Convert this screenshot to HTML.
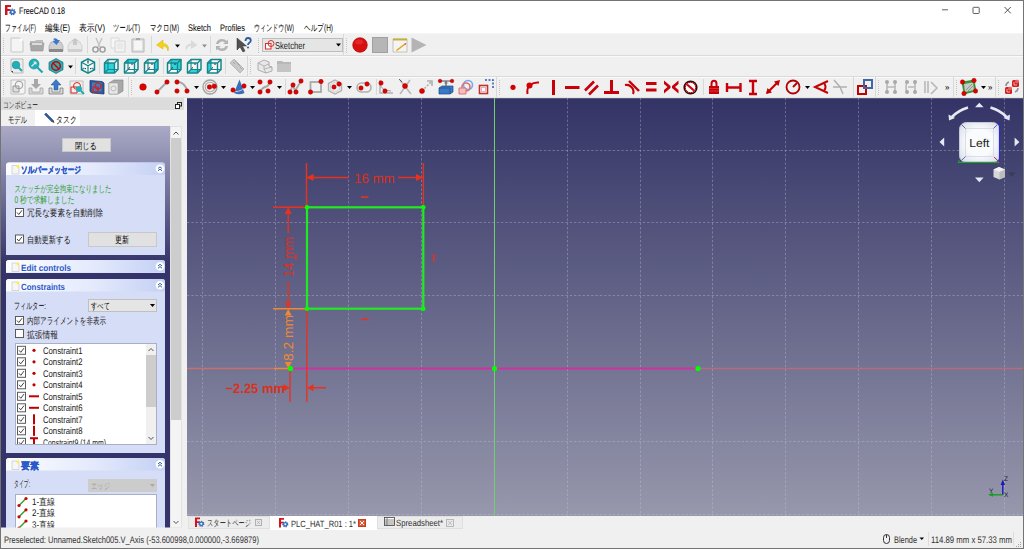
<!DOCTYPE html>
<html><head><meta charset="utf-8"><title>FreeCAD</title>
<style>html,body{margin:0;padding:0;width:1024px;height:549px;overflow:hidden;background:#f0f0f0}svg{display:block}text{font-family:"Liberation Sans",sans-serif;text-rendering:geometricPrecision}</style></head>
<body><svg width="1024" height="549" viewBox="0 0 1024 549">
<rect x="0" y="0" width="1024" height="549" fill="#f0f0f0"/>
<rect x="1" y="1" width="1022" height="32" fill="#ffffff"/>
<g transform="translate(5,5)"><path d="M0 0H6V2H2.5V4H5.5V6H2.5V10H0Z" fill="#d0161b"/><circle cx="7.5" cy="7" r="2.6" fill="#3a6fb8" stroke="#3a6fb8" stroke-width="1.6" stroke-dasharray="1.2 1"/><circle cx="7.5" cy="7" r="1" fill="#fff"/></g>
<text x="19.00" y="14" textLength="46.00" lengthAdjust="spacingAndGlyphs" font-size="9.5" fill="#000">FreeCAD 0.18</text>
<path d="M942 9.8H948" stroke="#606060" stroke-width="1"/>
<rect x="973" y="7.3" width="6.2" height="6.2" rx=".6" fill="none" stroke="#606060" stroke-width="1"/>
<path d="M1004.5 7L1010.8 13.3M1010.8 7L1004.5 13.3" stroke="#505050" stroke-width="1"/>
<text x="5.00" y="30.5" textLength="31.00" lengthAdjust="spacingAndGlyphs" font-size="9.5" fill="#000">ファイル(F)</text>
<text x="45.00" y="30.5" textLength="25.00" lengthAdjust="spacingAndGlyphs" font-size="9.5" fill="#000">編集(E)</text>
<text x="79.00" y="30.5" textLength="26.00" lengthAdjust="spacingAndGlyphs" font-size="9.5" fill="#000">表示(V)</text>
<text x="113.00" y="30.5" textLength="27.00" lengthAdjust="spacingAndGlyphs" font-size="9.5" fill="#000">ツール(T)</text>
<text x="150.00" y="30.5" textLength="29.00" lengthAdjust="spacingAndGlyphs" font-size="9.5" fill="#000">マクロ(M)</text>
<text x="188.00" y="30.5" textLength="23.00" lengthAdjust="spacingAndGlyphs" font-size="9.5" fill="#000">Sketch</text>
<text x="220.00" y="30.5" textLength="25.00" lengthAdjust="spacingAndGlyphs" font-size="9.5" fill="#000">Profiles</text>
<text x="254.00" y="30.5" textLength="40.00" lengthAdjust="spacingAndGlyphs" font-size="9.5" fill="#000">ウィンドウ(W)</text>
<text x="304.00" y="30.5" textLength="29.00" lengthAdjust="spacingAndGlyphs" font-size="9.5" fill="#000">ヘルプ(H)</text>
<rect x="1" y="33" width="1022" height="1" fill="#f5f5f5"/>
<rect x="1" y="55" width="1022" height="1" fill="#dadada"/><rect x="1" y="56" width="1022" height="1" fill="#fafafa"/>
<rect x="1" y="76" width="1022" height="1" fill="#dadada"/><rect x="1" y="77" width="1022" height="1" fill="#fafafa"/>
<rect x="1" y="97" width="1022" height="1" fill="#e2e2e2"/>

<rect x="3" y="38" width="1" height="1" fill="#c4c4c4"/><rect x="3" y="40" width="1" height="1" fill="#c4c4c4"/><rect x="3" y="42" width="1" height="1" fill="#c4c4c4"/><rect x="3" y="44" width="1" height="1" fill="#c4c4c4"/><rect x="3" y="46" width="1" height="1" fill="#c4c4c4"/><rect x="3" y="48" width="1" height="1" fill="#c4c4c4"/><rect x="3" y="50" width="1" height="1" fill="#c4c4c4"/><rect x="3" y="52" width="1" height="1" fill="#c4c4c4"/>
<g transform="translate(9,37)"><path d="M2 1H11L14 4V15H2Z" fill="#f4f4f4" stroke="#c8c8c8"/><circle cx="12" cy="3" r="1.5" fill="#fff"/></g>
<g transform="translate(29,37)"><path d="M1 4H6L7 3H14V6H1Z" fill="#bdbdbd"/><path d="M1 6H15L14 14H2Z" fill="#a8a8a8" stroke="#959595" stroke-width=".6"/><path d="M3 6H13V8H3Z" fill="#dcdcdc"/></g>
<g transform="translate(48,37)"><path d="M1 9L3 5H13L15 9V14H1Z" fill="#cfcfcf" stroke="#9a9a9a" stroke-width=".6"/><path d="M1 12H15V15H1Z" fill="#8a8a8a"/><path d="M5 2Q8 0 10 3L12 3L8.5 8L4.5 4L7 3.5Q6 2.5 5 2Z" fill="#3b78c8"/></g>
<g transform="translate(67,37)"><path d="M1 9L3 5H13L15 9V14H1Z" fill="#e8e8e8" stroke="#c0c0c0" stroke-width=".6"/><path d="M1 12H15V15H1Z" fill="#d0d0d0"/><path d="M6 1H10V5H12L8 8L4 5H6Z" fill="#c8c8c8" transform="rotate(180 8 4.5)"/></g>
<rect x="87" y="36" width="1" height="17" fill="#d8d8d8"/>
<g transform="translate(91,37)"><path d="M5 1L9 10M11 1L7 10" stroke="#c4c4c4" stroke-width="1.4"/><circle cx="4.5" cy="12.5" r="2.6" fill="none" stroke="#9a9a9a" stroke-width="1.4"/><circle cx="11.5" cy="12.5" r="2.6" fill="none" stroke="#9a9a9a" stroke-width="1.4"/></g>
<g transform="translate(110,37)"><path d="M1 1H9V11H1Z" fill="#f6f6f6" stroke="#dadada"/><path d="M5 4H15V15H5Z" fill="#f2f2f2" stroke="#d4d4d4"/><path d="M7 7H13M7 9H13M7 11H13" stroke="#e0e0e0"/></g>
<g transform="translate(130,37)"><path d="M2 2H14V15H2Z" fill="#e0e0e0" stroke="#b8b8b8"/><path d="M4 4H12V13H4Z" fill="#f6f6f6"/><path d="M6 1H10V3H6Z" fill="#a8a8a8"/></g>
<rect x="151" y="36" width="1" height="17" fill="#d8d8d8"/>
<g transform="translate(155,37)"><path d="M13 14Q15 7 8 6.5V3L1.5 8L8 12V9Q12 9 13 14Z" fill="#f2d21a" stroke="#d8b000" stroke-width=".5"/></g>
<path d="M175 44.5H180L177.5 47.5Z" fill="#000"/>
<g transform="translate(183,37)"><path d="M3 14Q1 7 8 6.5V3L14.5 8L8 12V9Q4 9 3 14Z" fill="#dadada"/></g>
<path d="M202 44.5H207L204.5 47.5Z" fill="#909090"/>
<rect x="210" y="36" width="1" height="17" fill="#d8d8d8"/>
<g transform="translate(214,37)"><path d="M2 7Q3 2 8 2Q11 2 13 4L14 2V7H9L11 5.5Q10 4.5 8 4.5Q5.5 4.5 4.5 7Z" fill="#b4b4b4"/><path d="M14 9Q13 14 8 14Q5 14 3 12L2 14V9H7L5 10.5Q6 11.5 8 11.5Q10.5 11.5 11.5 9Z" fill="#b4b4b4"/></g>
<g transform="translate(236,37)"><path d="M1 1L1 13L4 10L7 15L9 14L6.5 9H10.5Z" fill="#505050" stroke="#303030" stroke-width=".5"/><path d="M9.5 4Q9.5 1 12 1Q14.8 1 14.8 3.5Q14.8 5 13 6Q12 6.7 12 8" fill="none" stroke="#2a5aa0" stroke-width="1.8"/><circle cx="12" cy="10.5" r="1" fill="#2a5aa0"/></g>
<rect x="258" y="38" width="1" height="1" fill="#c4c4c4"/><rect x="258" y="40" width="1" height="1" fill="#c4c4c4"/><rect x="258" y="42" width="1" height="1" fill="#c4c4c4"/><rect x="258" y="44" width="1" height="1" fill="#c4c4c4"/><rect x="258" y="46" width="1" height="1" fill="#c4c4c4"/><rect x="258" y="48" width="1" height="1" fill="#c4c4c4"/><rect x="258" y="50" width="1" height="1" fill="#c4c4c4"/><rect x="258" y="52" width="1" height="1" fill="#c4c4c4"/>
<rect x="262.5" y="38.5" width="80" height="13" fill="#e5e5e5" stroke="#bdbdbd"/>
<g transform="translate(265,40)"><rect x="0.5" y="3.5" width="5.5" height="5.5" fill="#fff" stroke="#d83030" stroke-width="1"/><circle cx="6" cy="3.5" r="3" fill="none" stroke="#d83030" stroke-width="1"/></g>
<text x="275.00" y="49" textLength="30.00" lengthAdjust="spacingAndGlyphs" font-size="10" fill="#202020">Sketcher</text>
<path d="M336 43.5H341L338.5 46.5Z" fill="#000"/>
<rect x="343" y="34" width="1" height="21" fill="#d8d8d8"/>
<rect x="346" y="38" width="1" height="1" fill="#c4c4c4"/><rect x="346" y="40" width="1" height="1" fill="#c4c4c4"/><rect x="346" y="42" width="1" height="1" fill="#c4c4c4"/><rect x="346" y="44" width="1" height="1" fill="#c4c4c4"/><rect x="346" y="46" width="1" height="1" fill="#c4c4c4"/><rect x="346" y="48" width="1" height="1" fill="#c4c4c4"/><rect x="346" y="50" width="1" height="1" fill="#c4c4c4"/><rect x="346" y="52" width="1" height="1" fill="#c4c4c4"/>
<g transform="translate(352,37)"><circle cx="8" cy="8" r="7.3" fill="#d81010" stroke="#900" stroke-width=".6"/><ellipse cx="7" cy="5" rx="4" ry="2.5" fill="#f04040" opacity=".5"/></g>
<g transform="translate(372,37)"><rect x="0.5" y="0.5" width="15" height="15" fill="#b6b6b6" stroke="#a0a0a0"/></g>
<g transform="translate(392,37)"><path d="M1 2H15V15H1Z" fill="#f4f4f0" stroke="#b0b0a8" stroke-width=".7"/><path d="M1 1.5H15V3.5H1Z" fill="#c8b040"/><path d="M4 13L12 7L13 8L5 14Z" fill="#e8a020"/><path d="M12 7L13.5 6L14.3 7L13 8Z" fill="#e03030"/></g>
<g transform="translate(411,37)"><path d="M0.5 0.5L15.5 8L0.5 15.5Z" fill="#b4b4b4"/></g>
<rect x="3" y="59" width="1" height="1" fill="#c4c4c4"/><rect x="3" y="61" width="1" height="1" fill="#c4c4c4"/><rect x="3" y="63" width="1" height="1" fill="#c4c4c4"/><rect x="3" y="65" width="1" height="1" fill="#c4c4c4"/><rect x="3" y="67" width="1" height="1" fill="#c4c4c4"/><rect x="3" y="69" width="1" height="1" fill="#c4c4c4"/><rect x="3" y="71" width="1" height="1" fill="#c4c4c4"/><rect x="3" y="73" width="1" height="1" fill="#c4c4c4"/>
<g transform="translate(9,58)"><path d="M2 1H14V15H4L2 13Z" fill="#ececec" stroke="#a8a8a8" stroke-width=".7"/><circle cx="7" cy="7" r="3.8" fill="#20b0b8" stroke="#108890" stroke-width=".6"/><path d="M9.5 9.5L13 13" stroke="#20a8b0" stroke-width="2"/><path d="M2 13L4 13L4 15Z" fill="#444"/></g>
<g transform="translate(28,58)"><circle cx="6" cy="6" r="5" fill="#20b0b8" stroke="#108890" stroke-width=".6"/><path d="M3.5 8.5L8 4M8 4H5.5M8 4V6.5" stroke="#e8e8e8" stroke-width="1.1" fill="none"/><path d="M9.5 9.5L14.5 14.5" stroke="#20a8b0" stroke-width="2.2"/></g>
<g transform="translate(48,58)"><path d="M8 0.5L15 4.3V11.7L8 15.5L1 11.7V4.3Z" fill="#20b0b8" stroke="#107078" stroke-width=".7"/><circle cx="8" cy="8" r="4.3" fill="none" stroke="#d00000" stroke-width="1.5"/><path d="M5 5L11 11" stroke="#d00000" stroke-width="1.5"/></g>
<path d="M68 65.5H73L70.5 68.5Z" fill="#000"/>
<rect x="75" y="58" width="1" height="16" fill="#d8d8d8"/>
<g transform="translate(80,58)"><path d="M8 0.8L14.5 4.3V11.7L8 15.2L1.5 11.7V4.3Z" fill="#f8f8f8" stroke="#17868c" stroke-width="1.5"/><path d="M1.5 4.3L8 7.8L14.5 4.3M8 7.8V15M8 0.8V4M1.5 11.7L4.5 10M14.5 11.7L11.5 10" stroke="#17868c" stroke-width="1.2" fill="none"/><path d="M8 3.5V5.5M5 11L6 10.3M11 11L10 10.3" stroke="#222" stroke-width="1"/></g>
<rect x="99" y="58" width="1" height="16" fill="#d8d8d8"/>
<g transform="translate(103,58)"><path d="M1.5 5L5 1.5H15V11.5L11.5 15H1.5Z" fill="#f8f8f8"/><path d="M1.5 5H11.5V15H1.5Z" fill="#2cd4dc"/><path d="M5 1.5V11.5H15M5 11.5L1.5 15" stroke="#17868c" stroke-width="1.1" fill="none"/><path d="M1.5 5L5 1.5H15V11.5L11.5 15H1.5Z" stroke="#17868c" stroke-width="1.5" fill="none" stroke-linejoin="round"/><path d="M1.5 5H11.5V15M11.5 5L15 1.5" stroke="#17868c" stroke-width="1.4" fill="none"/></g>
<g transform="translate(123,58)"><path d="M1.5 5L5 1.5H15V11.5L11.5 15H1.5Z" fill="#f8f8f8"/><path d="M1.5 5L5 1.5H15L11.5 5Z" fill="#2cd4dc"/><path d="M5 1.5V11.5H15M5 11.5L1.5 15" stroke="#17868c" stroke-width="1.1" fill="none"/><path d="M1.5 5L5 1.5H15V11.5L11.5 15H1.5Z" stroke="#17868c" stroke-width="1.5" fill="none" stroke-linejoin="round"/><path d="M1.5 5H11.5V15M11.5 5L15 1.5" stroke="#17868c" stroke-width="1.4" fill="none"/><path d="M5.5 10.5L7 9.5M9 5.5V7" stroke="#222" stroke-width="1"/></g>
<g transform="translate(143,58)"><path d="M1.5 5L5 1.5H15V11.5L11.5 15H1.5Z" fill="#f8f8f8"/><path d="M11.5 5L15 1.5V11.5L11.5 15Z" fill="#2cd4dc"/><path d="M5 1.5V11.5H15M5 11.5L1.5 15" stroke="#17868c" stroke-width="1.1" fill="none"/><path d="M1.5 5L5 1.5H15V11.5L11.5 15H1.5Z" stroke="#17868c" stroke-width="1.5" fill="none" stroke-linejoin="round"/><path d="M1.5 5H11.5V15M11.5 5L15 1.5" stroke="#17868c" stroke-width="1.4" fill="none"/><path d="M5.5 10.5L7 9.5M9 5.5V7" stroke="#222" stroke-width="1"/></g>
<rect x="163" y="58" width="1" height="16" fill="#d8d8d8"/>
<g transform="translate(166,58)"><path d="M1.5 5L5 1.5H15V11.5L11.5 15H1.5Z" fill="#f8f8f8"/><path d="M5 1.5H15V11.5H5Z" fill="#2cd4dc"/><path d="M5 1.5V11.5H15M5 11.5L1.5 15" stroke="#17868c" stroke-width="1.1" fill="none"/><path d="M1.5 5L5 1.5H15V11.5L11.5 15H1.5Z" stroke="#17868c" stroke-width="1.5" fill="none" stroke-linejoin="round"/><path d="M1.5 5H11.5V15M11.5 5L15 1.5" stroke="#17868c" stroke-width="1.4" fill="none"/><path d="M5.5 10.5L7 9.5M9 5.5V7" stroke="#222" stroke-width="1"/></g>
<g transform="translate(186,58)"><path d="M1.5 5L5 1.5H15V11.5L11.5 15H1.5Z" fill="#f8f8f8"/><path d="M1.5 15L5 11.5H15L11.5 15Z" fill="#2cd4dc"/><path d="M5 1.5V11.5H15M5 11.5L1.5 15" stroke="#17868c" stroke-width="1.1" fill="none"/><path d="M1.5 5L5 1.5H15V11.5L11.5 15H1.5Z" stroke="#17868c" stroke-width="1.5" fill="none" stroke-linejoin="round"/><path d="M1.5 5H11.5V15M11.5 5L15 1.5" stroke="#17868c" stroke-width="1.4" fill="none"/><path d="M5.5 10.5L7 9.5M9 5.5V7" stroke="#222" stroke-width="1"/></g>
<g transform="translate(206,58)"><path d="M1.5 5L5 1.5H15V11.5L11.5 15H1.5Z" fill="#f8f8f8"/><path d="M1.5 5L5 1.5V11.5L1.5 15Z" fill="#2cd4dc"/><path d="M5 1.5V11.5H15M5 11.5L1.5 15" stroke="#17868c" stroke-width="1.1" fill="none"/><path d="M1.5 5L5 1.5H15V11.5L11.5 15H1.5Z" stroke="#17868c" stroke-width="1.5" fill="none" stroke-linejoin="round"/><path d="M1.5 5H11.5V15M11.5 5L15 1.5" stroke="#17868c" stroke-width="1.4" fill="none"/><path d="M5.5 10.5L7 9.5M9 5.5V7" stroke="#222" stroke-width="1"/></g>
<rect x="225" y="58" width="1" height="16" fill="#d8d8d8"/>
<g transform="translate(229,58)"><path d="M1 5L5 1L15 11L11 15Z" fill="#c8c8c8" stroke="#a8a8a8" stroke-width=".7"/><path d="M4 4L6 6M6 3L7.5 4.5M8 5L10 7M9.5 6.5L11 8M11 9L13 11" stroke="#909090" stroke-width=".6"/></g>
<rect x="247" y="56" width="1" height="20" fill="#d8d8d8"/>
<rect x="250" y="59" width="1" height="1" fill="#c4c4c4"/><rect x="250" y="61" width="1" height="1" fill="#c4c4c4"/><rect x="250" y="63" width="1" height="1" fill="#c4c4c4"/><rect x="250" y="65" width="1" height="1" fill="#c4c4c4"/><rect x="250" y="67" width="1" height="1" fill="#c4c4c4"/><rect x="250" y="69" width="1" height="1" fill="#c4c4c4"/><rect x="250" y="71" width="1" height="1" fill="#c4c4c4"/><rect x="250" y="73" width="1" height="1" fill="#c4c4c4"/>
<g transform="translate(257,58)"><path d="M1 5L7 2L12 4V8L15 9V13L9 15L1 12Z" fill="#e8e8e8" stroke="#a0a0a0" stroke-width=".8"/><path d="M1 5L7 8L12 6M7 8V11L15 9M7 11L9 15" stroke="#a0a0a0" stroke-width=".7" fill="none"/></g>
<g transform="translate(276,58)"><path d="M1 3H6L7 4H15V14H1Z" fill="#b8b8b8"/><path d="M1 6H15V14H1Z" fill="#c4c4c4"/></g>
<rect x="3" y="80" width="1" height="1" fill="#c4c4c4"/><rect x="3" y="82" width="1" height="1" fill="#c4c4c4"/><rect x="3" y="84" width="1" height="1" fill="#c4c4c4"/><rect x="3" y="86" width="1" height="1" fill="#c4c4c4"/><rect x="3" y="88" width="1" height="1" fill="#c4c4c4"/><rect x="3" y="90" width="1" height="1" fill="#c4c4c4"/><rect x="3" y="92" width="1" height="1" fill="#c4c4c4"/><rect x="3" y="94" width="1" height="1" fill="#c4c4c4"/>
<g transform="translate(10,79)"><path d="M1 1H15V14L13 15H1Z" fill="#f4f4f4" stroke="#b0b0b0" stroke-width=".8"/><path d="M3 7H9V13H3Z" fill="#e0e0e0" stroke="#9a9a9a"/><circle cx="9" cy="6" r="3.8" fill="none" stroke="#9a9a9a" stroke-width="1"/></g>
<g transform="translate(28,79)"><path d="M1 9H4V13H12V9H15V15H1Z" fill="#d8d8d8" stroke="#a0a0a0" stroke-width=".7"/><path d="M6 0H10V5H13L8 10L3 5H6Z" fill="#a8a8a8"/></g>
<g transform="translate(48,79)"><path d="M1 9H4V13H12V9H15V15H1Z" fill="#d8d8d8" stroke="#707070" stroke-width=".7"/><path d="M6 11H10V6H13L8 0.5L3 6H6Z" fill="#3a78c8" stroke="#20508a" stroke-width=".5"/></g>
<g transform="translate(69,79)"><path d="M1 2H14V15H1Z" fill="#f0f0f0" stroke="#b0b0b0" stroke-width=".8"/><path d="M2 8H8V14H2Z" fill="none" stroke="#e02020" stroke-width="1"/><circle cx="8" cy="7" r="3.5" fill="none" stroke="#e02020" stroke-width="1"/><circle cx="10" cy="10" r="3" fill="#20b0b8"/><path d="M12 12L15 15" stroke="#20a8b0" stroke-width="1.8"/></g>
<g transform="translate(89,79)"><path d="M1 1.5L13 2.5L15 4V15L3 14L1 12.5Z" fill="#2e5a98" stroke="#1e3a70" stroke-width=".8"/><path d="M3 3.5H12.5V12.5H3Z" fill="#4a7ab8"/><path d="M4 8H9V13H4Z" fill="none" stroke="#d02020" stroke-width="1.2"/><circle cx="9" cy="7" r="3" fill="none" stroke="#d02020" stroke-width="1.2"/></g>
<g transform="translate(108,79)"><path d="M1 4L6 1H15V12L10 15H1Z" fill="#a8a8a8" stroke="#808080" stroke-width=".6"/><path d="M1 4H10V15H1Z" fill="#e8e8e8" stroke="#a0a0a0" stroke-width=".6"/><circle cx="5.5" cy="9.5" r="2.5" fill="none" stroke="#b8b8b8"/></g>
<rect x="128" y="77" width="1" height="20" fill="#d8d8d8"/>
<rect x="131" y="80" width="1" height="1" fill="#c4c4c4"/><rect x="131" y="82" width="1" height="1" fill="#c4c4c4"/><rect x="131" y="84" width="1" height="1" fill="#c4c4c4"/><rect x="131" y="86" width="1" height="1" fill="#c4c4c4"/><rect x="131" y="88" width="1" height="1" fill="#c4c4c4"/><rect x="131" y="90" width="1" height="1" fill="#c4c4c4"/><rect x="131" y="92" width="1" height="1" fill="#c4c4c4"/><rect x="131" y="94" width="1" height="1" fill="#c4c4c4"/>
<g transform="translate(135,79)"><circle cx="8" cy="8" r="3.3" fill="#e00000" stroke="#a00000" stroke-width=".5"/></g>
<g transform="translate(154,79)"><path d="M3 13L13 3" stroke="#a8a8a8" stroke-width="2"/><circle cx="3" cy="13" r="2.2" fill="#e00000" stroke="#a00000" stroke-width=".5"/><circle cx="13" cy="3" r="2.2" fill="#e00000" stroke="#a00000" stroke-width=".5"/></g>
<g transform="translate(174,79)"><path d="M3 3Q11 3 13 12" stroke="#a8a8a8" stroke-width="2" fill="none"/><circle cx="3" cy="3" r="2.2" fill="#e00000" stroke="#a00000" stroke-width=".5"/><circle cx="3" cy="12" r="2.2" fill="#e00000" stroke="#a00000" stroke-width=".5"/><circle cx="13" cy="12" r="2.2" fill="#e00000" stroke="#a00000" stroke-width=".5"/></g>
<path d="M194 86H199L196.5 89Z" fill="#000"/>
<g transform="translate(202,79)"><circle cx="8" cy="8" r="7" fill="none" stroke="#a0a0a0" stroke-width="1.3"/><circle cx="8" cy="8" r="4.8" fill="none" stroke="#a8a8a8" stroke-width="1.1"/><circle cx="7.5" cy="8" r="2.3" fill="#e00000" stroke="#a00000" stroke-width=".5"/><circle cx="12.3" cy="7.3" r="2.3" fill="#e00000" stroke="#a00000" stroke-width=".5"/></g>
<path d="M221 86H226L223.5 89Z" fill="#000"/>
<g transform="translate(231,79)"><path d="M8.5 0.5L13.5 14Q8 16.5 3 14Z" fill="#3a70b8"/><path d="M1 12Q8 14 13 9" stroke="#c8c8e0" stroke-width="1" fill="none"/><circle cx="2" cy="11" r="2.2" fill="#e00000" stroke="#a00000" stroke-width=".5"/><circle cx="13" cy="7" r="2.2" fill="#e00000" stroke="#a00000" stroke-width=".5"/></g>
<path d="M250 86H255L252.5 89Z" fill="#000"/>
<g transform="translate(257,79)"><path d="M3 13Q5 9 8 8Q12 7 13 3" stroke="#a8a8a8" stroke-width="2" fill="none"/><circle cx="3" cy="3" r="2.2" fill="#e00000" stroke="#a00000" stroke-width=".5"/><circle cx="13" cy="3" r="2.2" fill="#e00000" stroke="#a00000" stroke-width=".5"/><circle cx="3" cy="13" r="2.2" fill="#e00000" stroke="#a00000" stroke-width=".5"/><circle cx="11" cy="12" r="2.2" fill="#e00000" stroke="#a00000" stroke-width=".5"/></g>
<path d="M277 86H282L279.5 89Z" fill="#000"/>
<rect x="285" y="79" width="1" height="16" fill="#d8d8d8"/>
<g transform="translate(288,79)"><path d="M2 13L5 6L7 12L13 2" stroke="#a8a8a8" stroke-width="1.8" fill="none"/><circle cx="5" cy="6" r="2.2" fill="#e00000" stroke="#a00000" stroke-width=".5"/><circle cx="13" cy="2" r="2.2" fill="#e00000" stroke="#a00000" stroke-width=".5"/><circle cx="2" cy="13" r="2.2" fill="#e00000" stroke="#a00000" stroke-width=".5"/><circle cx="8" cy="13" r="2.2" fill="#e00000" stroke="#a00000" stroke-width=".5"/></g>
<g transform="translate(308,79)"><rect x="2.5" y="3" width="10.5" height="10" fill="none" stroke="#a8a8a8" stroke-width="1.8"/><circle cx="2.5" cy="13" r="2.2" fill="#e00000" stroke="#a00000" stroke-width=".5"/><circle cx="13" cy="2.5" r="2.2" fill="#e00000" stroke="#a00000" stroke-width=".5"/></g>
<g transform="translate(327,79)"><path d="M8 1L14.5 4.5V11.5L8 15L1.5 11.5V4.5Z" fill="none" stroke="#b0b0b0" stroke-width="1.4"/><path d="M8 3L12.5 5.5V10.5L8 13L3.5 10.5V5.5Z" fill="none" stroke="#c8c8c8" stroke-width=".8"/><circle cx="7" cy="8" r="2.2" fill="#e00000" stroke="#a00000" stroke-width=".5"/><circle cx="12" cy="5" r="2.2" fill="#e00000" stroke="#a00000" stroke-width=".5"/></g>
<path d="M347 86H352L349.5 89Z" fill="#000"/>
<g transform="translate(356,79)"><rect x="1" y="4" width="14" height="9" rx="4.5" fill="none" stroke="#b0b0b0" stroke-width="1.6"/><circle cx="5" cy="9" r="2.2" fill="#e00000" stroke="#a00000" stroke-width=".5"/><circle cx="11" cy="5" r="2.2" fill="#e00000" stroke="#a00000" stroke-width=".5"/></g>
<rect x="376" y="79" width="1" height="16" fill="#d8d8d8"/>
<g transform="translate(378,79)"><path d="M2 1V14H15" stroke="#b0b0b0" stroke-width="1.4" fill="none"/><path d="M2 3Q2 12 13 12" stroke="#a0a0a0" stroke-width="1" fill="none"/><circle cx="3" cy="4" r="2.2" fill="#e00000" stroke="#a00000" stroke-width=".5"/><circle cx="7" cy="12" r="2.2" fill="#e00000" stroke="#a00000" stroke-width=".5"/></g>
<g transform="translate(398,79)"><path d="M2 1L13 15M12 1L2 15" stroke="#b8b8b8" stroke-width="1.6"/><path d="M1 0L4 3" stroke="#404040" stroke-width=".8"/><circle cx="7" cy="7" r="2.5" fill="#e00000" stroke="#a00000" stroke-width=".5"/></g>
<g transform="translate(418,79)"><path d="M4 12L14 2" stroke="#b0b0b0" stroke-width="1.6" stroke-dasharray="2 1.5"/><path d="M9 2H14V7" stroke="#b0b0b0" stroke-width="1.6" fill="none"/><circle cx="4" cy="12" r="2.5" fill="#e00000" stroke="#a00000" stroke-width=".5"/></g>
<g transform="translate(438,79)"><path d="M1 9L4 7H15V13L12 15H1Z" fill="#3a78c8" stroke="#1e4a80" stroke-width=".7"/><path d="M1 9H12V15" stroke="#1e4a80" stroke-width=".7" fill="none"/><path d="M8 2V7M6.5 4H9.5" stroke="#606060" stroke-width="1.2"/><path d="M2 2H14" stroke="#505050" stroke-width="1"/><circle cx="2" cy="2" r="1.8" fill="#e00000" stroke="#a00000" stroke-width=".5"/><circle cx="14" cy="2" r="1.8" fill="#e00000" stroke="#a00000" stroke-width=".5"/></g>
<g transform="translate(458,79)"><circle cx="10" cy="6" r="4.5" fill="none" stroke="#78a8f0" stroke-width="1.6"/><circle cx="8" cy="8" r="4" fill="none" stroke="#e07070" stroke-width="1.6"/><path d="M1 9H8V15H1Z" fill="#f0c0c0" stroke="#e07070" stroke-width="1"/></g>
<g transform="translate(478,79)"><path d="M7 1H15V9" stroke="#2a5ab0" stroke-width="1.5" stroke-dasharray="2 1.5" fill="none"/><rect x="1.5" y="6.5" width="8" height="8" fill="#fff" stroke="#c03030" stroke-width="1.6"/><rect x="3.5" y="8.5" width="4" height="4" fill="#fff" stroke="#e0a0a0" stroke-width=".8"/></g>
<rect x="496" y="77" width="1" height="20" fill="#d8d8d8"/>
<rect x="499" y="80" width="1" height="1" fill="#c4c4c4"/><rect x="499" y="82" width="1" height="1" fill="#c4c4c4"/><rect x="499" y="84" width="1" height="1" fill="#c4c4c4"/><rect x="499" y="86" width="1" height="1" fill="#c4c4c4"/><rect x="499" y="88" width="1" height="1" fill="#c4c4c4"/><rect x="499" y="90" width="1" height="1" fill="#c4c4c4"/><rect x="499" y="92" width="1" height="1" fill="#c4c4c4"/><rect x="499" y="94" width="1" height="1" fill="#c4c4c4"/>
<g transform="translate(505,79)"><circle cx="8" cy="8.3" r="2.6" fill="#d40000"/></g>
<g transform="translate(525,79)"><path d="M2.5 15Q1.5 9 5 6Q9 3 14 3.5" stroke="#c8000a" stroke-width="2" fill="none"/><circle cx="4.5" cy="6.5" r="3" fill="#d40000"/></g>
<g transform="translate(545,79)"><path d="M8.5 1V16" stroke="#c8000a" stroke-width="3"/></g>
<g transform="translate(565,79)"><path d="M0 8.5H14.5" stroke="#c8000a" stroke-width="3"/></g>
<g transform="translate(584,79)"><path d="M1 11.5L10 2.5M5 15.5L14 6.5" stroke="#c8000a" stroke-width="2.6"/></g>
<g transform="translate(604,79)"><path d="M7.5 1V13" stroke="#c8000a" stroke-width="3"/><path d="M0 12H15V15H0Z" fill="#c8000a"/></g>
<g transform="translate(624,79)"><path d="M1 6Q6 5 9 10Q10 13 9 15" stroke="#c8000a" stroke-width="2.2" fill="none"/><path d="M5 2L15 12" stroke="#c8000a" stroke-width="2.4"/></g>
<g transform="translate(643,79)"><path d="M3 4.5H13.5M3 11H13.5" stroke="#c8000a" stroke-width="3"/></g>
<g transform="translate(663,79)"><path d="M1 1.5L7.5 7L7.5 9L1 14.5L1 11L4.5 8L1 5Z" fill="#c8000a"/><path d="M15.5 1.5L9 7L9 9L15.5 14.5L15.5 11L12 8L15.5 5Z" fill="#c8000a"/></g>
<g transform="translate(683,79)"><circle cx="7.5" cy="8.5" r="6.3" fill="#fff" stroke="#2a0808" stroke-width="1.6"/><circle cx="7.5" cy="8.5" r="5.2" fill="none" stroke="#c8000a" stroke-width="1"/><path d="M4 5.5L11 11.5" stroke="#c8000a" stroke-width="2.2"/></g>
<rect x="703" y="79" width="1" height="16" fill="#d8d8d8"/>
<g transform="translate(708,79)"><path d="M3.5 8V5Q3.5 1.8 6 1.8Q8.5 1.8 8.5 5V8" stroke="#c8000a" stroke-width="2" fill="none"/><rect x="1" y="7" width="10" height="8" fill="#c8000a"/><path d="M1 9.5H11M1 12H11" stroke="#e05050" stroke-width=".6"/></g>
<g transform="translate(726,79)"><path d="M1 4V13M14.5 4V13M1 8.5H14.5" stroke="#c8000a" stroke-width="2.4"/></g>
<g transform="translate(745,79)"><path d="M4 2H12M4 15H12M8 2V15" stroke="#c8000a" stroke-width="2.4"/></g>
<g transform="translate(765,79)"><path d="M2 14L13 3" stroke="#c40000" stroke-width="2.2"/><path d="M15 1L9 2.5L13.5 7Z M1 15L2.5 9L7 13.5Z" fill="#c40000"/></g>
<g transform="translate(785,79)"><circle cx="8" cy="8" r="6.5" fill="none" stroke="#b00000" stroke-width="1.8"/><path d="M8 8L12 4" stroke="#b00000" stroke-width="1.8"/></g>
<path d="M805 86H810L807.5 89Z" fill="#000"/>
<g transform="translate(813,79)"><path d="M15 2L2 8L15 14M11 4Q14 8 11 12" stroke="#c40000" stroke-width="2" fill="none"/></g>
<g transform="translate(832,79)"><path d="M1 8H15" stroke="#b0b0b0" stroke-width="1.5"/><path d="M2 1L8 8L11 15" stroke="#b0b0b0" stroke-width="1.5" fill="none"/></g>
<rect x="853" y="77" width="1" height="20" fill="#d8d8d8"/>
<g transform="translate(857,79)"><rect x="1" y="7" width="8" height="8" fill="none" stroke="#c40000" stroke-width="2"/><rect x="7" y="1" width="8" height="8" fill="none" stroke="#3a68a8" stroke-width="2"/></g>
<rect x="875" y="77" width="1" height="20" fill="#d8d8d8"/>
<rect x="878" y="80" width="1" height="1" fill="#c4c4c4"/><rect x="878" y="82" width="1" height="1" fill="#c4c4c4"/><rect x="878" y="84" width="1" height="1" fill="#c4c4c4"/><rect x="878" y="86" width="1" height="1" fill="#c4c4c4"/><rect x="878" y="88" width="1" height="1" fill="#c4c4c4"/><rect x="878" y="90" width="1" height="1" fill="#c4c4c4"/><rect x="878" y="92" width="1" height="1" fill="#c4c4c4"/><rect x="878" y="94" width="1" height="1" fill="#c4c4c4"/>
<g transform="translate(883,79)"><path d="M4 3V13M12 3V13M4 8H12" stroke="#b8b8b8" stroke-width="1.6" fill="none"/><circle cx="4" cy="3" r="2" fill="#a8a8a8"/><circle cx="12" cy="3" r="2" fill="#a8a8a8"/><circle cx="4" cy="13" r="2" fill="#a8a8a8"/><circle cx="12" cy="13" r="2" fill="#a8a8a8"/></g>
<g transform="translate(903,79)"><path d="M4 3Q2 8 4 13M12 3V13M5 8H11" stroke="#b8b8b8" stroke-width="1.6" fill="none"/><circle cx="4" cy="3" r="2" fill="#a8a8a8"/><circle cx="12" cy="3" r="2" fill="#a8a8a8"/><circle cx="4" cy="13" r="2" fill="#a8a8a8"/><circle cx="12" cy="13" r="2" fill="#a8a8a8"/></g>
<g transform="translate(923,79)"><path d="M2 2V14M5 2V14M8 3L14 9L8 15" stroke="#b8b8b8" stroke-width="1.6" fill="none"/></g>
<text x="945.00" y="89.5" textLength="4.45" lengthAdjust="spacingAndGlyphs" font-size="8" fill="#000">»</text>
<rect x="953" y="77" width="1" height="20" fill="#d8d8d8"/>
<rect x="956" y="80" width="1" height="1" fill="#c4c4c4"/><rect x="956" y="82" width="1" height="1" fill="#c4c4c4"/><rect x="956" y="84" width="1" height="1" fill="#c4c4c4"/><rect x="956" y="86" width="1" height="1" fill="#c4c4c4"/><rect x="956" y="88" width="1" height="1" fill="#c4c4c4"/><rect x="956" y="90" width="1" height="1" fill="#c4c4c4"/><rect x="956" y="92" width="1" height="1" fill="#c4c4c4"/><rect x="956" y="94" width="1" height="1" fill="#c4c4c4"/>
<g transform="translate(961,79)"><path d="M1 3L13 1L15 12L3 15Z" fill="#30a030" stroke="#207020" stroke-width=".6"/><path d="M3 5L12 3.5L13 11L4 13Z" fill="#c8c8c8"/><path d="M5 11L11 5M7 12L12 7" stroke="#888" stroke-width=".8"/><circle cx="1.5" cy="3" r="2.2" fill="#e00000" stroke="#a00000" stroke-width=".5"/><circle cx="13" cy="1.5" r="2.2" fill="#e00000" stroke="#a00000" stroke-width=".5"/><circle cx="14.5" cy="12" r="2.2" fill="#e00000" stroke="#a00000" stroke-width=".5"/><circle cx="3" cy="14.5" r="2.2" fill="#e00000" stroke="#a00000" stroke-width=".5"/></g>
<path d="M981 86H986L983.5 89Z" fill="#000"/>
<text x="988.00" y="89.5" textLength="4.45" lengthAdjust="spacingAndGlyphs" font-size="8" fill="#000">»</text>
<rect x="995" y="77" width="1" height="20" fill="#d8d8d8"/>
<rect x="998" y="80" width="1" height="1" fill="#c4c4c4"/><rect x="998" y="82" width="1" height="1" fill="#c4c4c4"/><rect x="998" y="84" width="1" height="1" fill="#c4c4c4"/><rect x="998" y="86" width="1" height="1" fill="#c4c4c4"/><rect x="998" y="88" width="1" height="1" fill="#c4c4c4"/><rect x="998" y="90" width="1" height="1" fill="#c4c4c4"/><rect x="998" y="92" width="1" height="1" fill="#c4c4c4"/><rect x="998" y="94" width="1" height="1" fill="#c4c4c4"/>
<g transform="translate(1004,79)"><path d="M2 7Q2 4 5 3M14 9Q14 12 11 13" stroke="#909090" stroke-width="1.6" fill="none"/><rect x="8" y="1" width="7" height="7" rx="1.5" fill="#d02020"/><rect x="1" y="8" width="7" height="7" rx="1.5" fill="#d02020"/><circle cx="13" cy="2.5" r="2" fill="#f08080" opacity=".7"/><circle cx="6" cy="9.5" r="2" fill="#f08080" opacity=".7"/><path d="M10 3V6H13M3 10V13H6" stroke="#f8d0d0" stroke-width=".8" fill="none"/></g>
<rect x="1" y="98" width="183" height="12" fill="#dcdcdc"/>
<text x="3.00" y="108" textLength="35.00" lengthAdjust="spacingAndGlyphs" font-size="9" fill="#303030">コンボビュー</text>
<g transform="translate(175,102)"><rect x="2.5" y=".5" width="4" height="3.5" fill="none" stroke="#222" stroke-width="1"/><rect x=".5" y="2.5" width="4" height="4" fill="#fff" stroke="#222" stroke-width="1"/></g>
<rect x="1" y="110" width="183" height="16" fill="#f0f0f0"/>
<rect x="35" y="110" width="45" height="16" fill="#ffffff"/>
<text x="8.00" y="123" textLength="19.00" lengthAdjust="spacingAndGlyphs" font-size="9.5" fill="#202020">モデル</text>
<g transform="translate(44,112.5)"><path d="M0.5 2L2 0.5L9.5 8L8 9.5Z" fill="#2a5aa0" stroke="#1a3a70" stroke-width=".5"/><path d="M8 9.5L9.5 8L10.5 10.5Z" fill="#303030"/></g>
<text x="56.00" y="123" textLength="21.00" lengthAdjust="spacingAndGlyphs" font-size="9.5" fill="#202020">タスク</text>
<defs><linearGradient id="pg" x1="0" y1="126" x2="0" y2="265" gradientUnits="userSpaceOnUse"><stop offset="0" stop-color="#aaaac6"/><stop offset="1" stop-color="#34346a"/></linearGradient><linearGradient id="hg" x1="0" y1="0" x2="1" y2="0"><stop offset="0" stop-color="#fcfdff"/><stop offset=".55" stop-color="#e4eafc"/><stop offset="1" stop-color="#c4d0f4"/></linearGradient></defs>
<rect x="1" y="126" width="169" height="402" fill="url(#pg)"/>
<rect x="170.5" y="126.5" width="11" height="401" fill="#f4f4f4" stroke="#e2e2e2"/>
<rect x="171" y="138" width="10" height="282" fill="#cdcdcd"/>
<path d="M173.5 134.5L176 132L178.5 134.5" stroke="#505050" stroke-width="1" fill="none"/>
<path d="M173.5 521L176 523.5L178.5 521" stroke="#505050" stroke-width="1" fill="none"/>
<rect x="184" y="98" width="3" height="430" fill="#f0f0f0"/><rect x="182" y="110" width="5" height="418" fill="#f0f0f0"/>
<rect x="62.5" y="138.5" width="48" height="13" fill="#e1e1e1" stroke="#c8c8c8"/>
<text x="75.00" y="148.5" textLength="22.00" lengthAdjust="spacingAndGlyphs" font-size="9" fill="#000">閉じる</text>
<path d="M6 255V165.5Q6 162.5 9 162.5H162Q165 162.5 165 165.5V255Z" fill="#d6ddf6"/>
<path d="M6 175.0V165.5Q6 162.5 9 162.5H162Q165 162.5 165 165.5V175.0Z" fill="url(#hg)"/>
<g transform="translate(12,165.5)"><path d="M0 0H5L7 2V8.5H0Z" fill="#f6f6f6" stroke="#c0c0c0" stroke-width=".6"/><circle cx="6" cy="1" r="1.4" fill="#f8f040"/></g>
<circle cx="160" cy="168.8" r="4.6" fill="#fff" stroke="#c8d0e8" stroke-width=".6"/><path d="M158 168.5L160 166.8L162 168.5M158 170.8L160 169.1L162 170.8" stroke="#2a5aa8" stroke-width="1" fill="none"/>
<text x="21.00" y="172.5" textLength="60.00" lengthAdjust="spacingAndGlyphs" font-size="9.5" fill="#2a58c8" font-weight="bold" stroke="#2a58c8" stroke-width="0.3">ソルバーメッセージ</text>
<text x="14.50" y="191.5" textLength="97.00" lengthAdjust="spacingAndGlyphs" font-size="9.5" fill="#30a030">スケッチが完全拘束になりました</text>
<text x="14.50" y="203" textLength="60.00" lengthAdjust="spacingAndGlyphs" font-size="9.5" fill="#30a030">0 秒で求解しました</text>
<rect x="15.5" y="208.5" width="8" height="8" fill="#fff" stroke="#5a5a5a"/>
<path d="M17 212.5L18.8 214.5L22 210.3" stroke="#404040" stroke-width="1" fill="none"/>
<text x="27.00" y="216" textLength="76.00" lengthAdjust="spacingAndGlyphs" font-size="9.5" fill="#202020">冗長な要素を自動削除</text>
<rect x="15.5" y="235.0" width="8" height="8" fill="#fff" stroke="#5a5a5a"/>
<path d="M17 239.0L18.8 241.0L22 236.8" stroke="#404040" stroke-width="1" fill="none"/>
<text x="27.00" y="242.5" textLength="44.00" lengthAdjust="spacingAndGlyphs" font-size="9.5" fill="#202020">自動更新する</text>
<rect x="88.5" y="232.5" width="68" height="14" fill="#e1e1e1" stroke="#c8c8c8"/>
<text x="115.00" y="243" textLength="14.00" lengthAdjust="spacingAndGlyphs" font-size="9.5" fill="#000">更新</text>
<path d="M6 273V263Q6 260 9 260H162Q165 260 165 263V273Z" fill="#d6ddf6"/>
<path d="M6 272.5V263Q6 260 9 260H162Q165 260 165 263V272.5Z" fill="url(#hg)"/>
<g transform="translate(12,263)"><path d="M0 0H5L7 2V8.5H0Z" fill="#f6f6f6" stroke="#c0c0c0" stroke-width=".6"/><circle cx="6" cy="1" r="1.4" fill="#f8f040"/></g>
<circle cx="160" cy="266.3" r="4.6" fill="#fff" stroke="#c8d0e8" stroke-width=".6"/><path d="M158 266L160 264.3L162 266M158 268.3L160 266.6L162 268.3" stroke="#2a5aa8" stroke-width="1" fill="none"/>
<text x="21.00" y="270.5" textLength="50.00" lengthAdjust="spacingAndGlyphs" font-size="9" fill="#2a58c8" font-weight="bold">Edit  controls</text>
<path d="M6 453V282Q6 279 9 279H162Q165 279 165 282V453Z" fill="#d6ddf6"/>
<path d="M6 291.5V282Q6 279 9 279H162Q165 279 165 282V291.5Z" fill="url(#hg)"/>
<g transform="translate(12,282)"><path d="M0 0H5L7 2V8.5H0Z" fill="#f6f6f6" stroke="#c0c0c0" stroke-width=".6"/><circle cx="6" cy="1" r="1.4" fill="#f8f040"/></g>
<circle cx="160" cy="285.3" r="4.6" fill="#fff" stroke="#c8d0e8" stroke-width=".6"/><path d="M158 285L160 283.3L162 285M158 287.3L160 285.6L162 287.3" stroke="#2a5aa8" stroke-width="1" fill="none"/>
<text x="21.00" y="289.5" textLength="44.00" lengthAdjust="spacingAndGlyphs" font-size="9" fill="#2a58c8" font-weight="bold">Constraints</text>
<text x="14.00" y="309" textLength="32.00" lengthAdjust="spacingAndGlyphs" font-size="9.5" fill="#202020">フィルター:</text>
<rect x="88.5" y="299.5" width="68" height="12" fill="#e5e5e5" stroke="#c0c0c0"/>
<text x="91.00" y="309" textLength="19.00" lengthAdjust="spacingAndGlyphs" font-size="9" fill="#000">すべて</text>
<path d="M150 304H155L152.5 307Z" fill="#000"/>
<rect x="15.5" y="316.5" width="8" height="8" fill="#fff" stroke="#5a5a5a"/>
<path d="M17 320.5L18.8 322.5L22 318.3" stroke="#404040" stroke-width="1" fill="none"/>
<text x="27.00" y="324" textLength="79.00" lengthAdjust="spacingAndGlyphs" font-size="9.5" fill="#202020">内部アライメントを非表示</text>
<rect x="15.5" y="329.5" width="8" height="8" fill="#fff" stroke="#5a5a5a"/>
<text x="27.00" y="337.5" textLength="31.00" lengthAdjust="spacingAndGlyphs" font-size="9.5" fill="#202020">拡張情報</text>
<rect x="15.5" y="343.5" width="141" height="101" fill="#fff" stroke="#a8b0c8"/>
<rect x="146" y="344" width="10" height="100" fill="#f0f0f0"/><rect x="146" y="355" width="10" height="52" fill="#cdcdcd"/>
<path d="M148.5 351L151 348.5L153.5 351" stroke="#505050" stroke-width="1" fill="none"/><path d="M148.5 437L151 439.5L153.5 437" stroke="#505050" stroke-width="1" fill="none"/>
<clipPath id="lc"><rect x="16" y="344" width="130" height="100"/></clipPath><g clip-path="url(#lc)">
<rect x="17.5" y="346.3" width="8" height="8" fill="#fff" stroke="#5a5a5a"/>
<path d="M19 350.3L20.8 352.3L24 348.1" stroke="#404040" stroke-width="1" fill="none"/>
<circle cx="34" cy="350.3" r="1.6" fill="#c00000"/>
<text x="43.00" y="353.6" textLength="39.50" lengthAdjust="spacingAndGlyphs" font-size="9.5" fill="#202020">Constraint1</text>
<rect x="17.5" y="357.8" width="8" height="8" fill="#fff" stroke="#5a5a5a"/>
<path d="M19 361.8L20.8 363.8L24 359.6" stroke="#404040" stroke-width="1" fill="none"/>
<circle cx="34" cy="361.8" r="1.6" fill="#c00000"/>
<text x="43.00" y="365.1" textLength="39.50" lengthAdjust="spacingAndGlyphs" font-size="9.5" fill="#202020">Constraint2</text>
<rect x="17.5" y="369.3" width="8" height="8" fill="#fff" stroke="#5a5a5a"/>
<path d="M19 373.3L20.8 375.3L24 371.1" stroke="#404040" stroke-width="1" fill="none"/>
<circle cx="34" cy="373.3" r="1.6" fill="#c00000"/>
<text x="43.00" y="376.6" textLength="39.50" lengthAdjust="spacingAndGlyphs" font-size="9.5" fill="#202020">Constraint3</text>
<rect x="17.5" y="380.8" width="8" height="8" fill="#fff" stroke="#5a5a5a"/>
<path d="M19 384.8L20.8 386.8L24 382.6" stroke="#404040" stroke-width="1" fill="none"/>
<circle cx="34" cy="384.8" r="1.6" fill="#c00000"/>
<text x="43.00" y="388.1" textLength="39.50" lengthAdjust="spacingAndGlyphs" font-size="9.5" fill="#202020">Constraint4</text>
<rect x="17.5" y="392.3" width="8" height="8" fill="#fff" stroke="#5a5a5a"/>
<path d="M19 396.3L20.8 398.3L24 394.1" stroke="#404040" stroke-width="1" fill="none"/>
<rect x="29" y="395.3" width="10" height="2" fill="#c00000"/>
<text x="43.00" y="399.6" textLength="39.50" lengthAdjust="spacingAndGlyphs" font-size="9.5" fill="#202020">Constraint5</text>
<rect x="17.5" y="403.8" width="8" height="8" fill="#fff" stroke="#5a5a5a"/>
<path d="M19 407.8L20.8 409.8L24 405.6" stroke="#404040" stroke-width="1" fill="none"/>
<rect x="29" y="406.8" width="10" height="2" fill="#c00000"/>
<text x="43.00" y="411.1" textLength="39.50" lengthAdjust="spacingAndGlyphs" font-size="9.5" fill="#202020">Constraint6</text>
<rect x="17.5" y="415.3" width="8" height="8" fill="#fff" stroke="#5a5a5a"/>
<path d="M19 419.3L20.8 421.3L24 417.1" stroke="#404040" stroke-width="1" fill="none"/>
<rect x="33" y="414.3" width="2" height="10" fill="#c00000"/>
<text x="43.00" y="422.6" textLength="39.50" lengthAdjust="spacingAndGlyphs" font-size="9.5" fill="#202020">Constraint7</text>
<rect x="17.5" y="426.8" width="8" height="8" fill="#fff" stroke="#5a5a5a"/>
<path d="M19 430.8L20.8 432.8L24 428.6" stroke="#404040" stroke-width="1" fill="none"/>
<rect x="33" y="425.8" width="2" height="10" fill="#c00000"/>
<text x="43.00" y="434.1" textLength="39.50" lengthAdjust="spacingAndGlyphs" font-size="9.5" fill="#202020">Constraint8</text>
<rect x="17.5" y="438.3" width="8" height="8" fill="#fff" stroke="#5a5a5a"/>
<path d="M19 442.3L20.8 444.3L24 440.1" stroke="#404040" stroke-width="1" fill="none"/>
<path d="M30 438.3H38M34 438.3V447.3" stroke="#c00000" stroke-width="2"/>
<text x="43.00" y="445.6" textLength="63.00" lengthAdjust="spacingAndGlyphs" font-size="9.5" fill="#202020">Constraint9 (14 mm)</text>
</g>
<path d="M6 560V461Q6 458 9 458H162Q165 458 165 461V560Z" fill="#d6ddf6"/>
<path d="M6 470.5V461Q6 458 9 458H162Q165 458 165 461V470.5Z" fill="url(#hg)"/>
<g transform="translate(12,461)"><path d="M0 0H5L7 2V8.5H0Z" fill="#f6f6f6" stroke="#c0c0c0" stroke-width=".6"/><circle cx="6" cy="1" r="1.4" fill="#f8f040"/></g>
<circle cx="160" cy="464.3" r="4.6" fill="#fff" stroke="#c8d0e8" stroke-width=".6"/><path d="M158 464L160 462.3L162 464M158 466.3L160 464.6L162 466.3" stroke="#2a5aa8" stroke-width="1" fill="none"/>
<text x="21.00" y="468.5" textLength="18.00" lengthAdjust="spacingAndGlyphs" font-size="9.5" fill="#2a58c8" font-weight="bold" stroke="#2a58c8" stroke-width="0.3">要素</text>
<text x="14.00" y="487" textLength="16.00" lengthAdjust="spacingAndGlyphs" font-size="9.5" fill="#303030">タイプ:</text>
<rect x="88" y="479" width="69" height="13" fill="#cccccc"/>
<text x="91.00" y="488.5" textLength="19.00" lengthAdjust="spacingAndGlyphs" font-size="9" fill="#a0a0a0">エッジ</text>
<path d="M150 484H155L152.5 487Z" fill="#a8a8a8"/>
<rect x="15.5" y="494.5" width="141" height="40" fill="#fff" stroke="#a8b0c8"/>
<path d="M19 505.5L26 498.5" stroke="#30a030" stroke-width="1.4"/><circle cx="19" cy="505.5" r="1.6" fill="#d00000"/><circle cx="26" cy="498.5" r="1.6" fill="#d00000"/>
<text x="32.00" y="505.0" textLength="23.00" lengthAdjust="spacingAndGlyphs" font-size="9.5" fill="#202020">1-直線</text>
<path d="M19 516.8L26 509.79999999999995" stroke="#30a030" stroke-width="1.4"/><circle cx="19" cy="516.8" r="1.6" fill="#d00000"/><circle cx="26" cy="509.79999999999995" r="1.6" fill="#d00000"/>
<text x="32.00" y="516.3" textLength="23.00" lengthAdjust="spacingAndGlyphs" font-size="9.5" fill="#202020">2-直線</text>
<path d="M19 528L26 521" stroke="#30a030" stroke-width="1.4"/><circle cx="19" cy="528" r="1.6" fill="#d00000"/><circle cx="26" cy="521" r="1.6" fill="#d00000"/>
<text x="32.00" y="527.5" textLength="23.00" lengthAdjust="spacingAndGlyphs" font-size="9.5" fill="#202020">3-直線</text>
<rect x="1" y="527.5" width="186" height="21" fill="#f0f0f0"/>
<rect x="187" y="516" width="837" height="12" fill="#f0f0f0"/>
<rect x="188.5" y="516.5" width="81" height="12" fill="#ececec" stroke="#e0e0e0"/>
<rect x="270" y="516" width="107" height="14" fill="#ffffff"/>
<rect x="377.5" y="516.5" width="85" height="12" fill="#ececec" stroke="#e0e0e0"/>
<g transform="translate(195,517.5)"><path d="M0 0H5V1.8H2V3.8H4.5V5.5H2V9.5H0Z" fill="#d0161b"/><circle cx="6.3" cy="6.3" r="2.4" fill="#3a6fb8" stroke="#3a6fb8" stroke-width="1.4" stroke-dasharray="1.1 .9"/><circle cx="6.3" cy="6.3" r="1" fill="#fff"/></g>
<text x="207.00" y="526" textLength="44.00" lengthAdjust="spacingAndGlyphs" font-size="9" fill="#303030">スタートページ</text>
<rect x="255.5" y="519.5" width="6" height="6" fill="#e8e8e8" stroke="#b0b0b0"/><path d="M257 521L260 524M260 521L257 524" stroke="#b0b0b0" stroke-width=".8"/>
<g transform="translate(279,518)"><path d="M0 0H5V1.8H2V3.8H4.5V5.5H2V9.5H0Z" fill="#d0161b"/><circle cx="6.3" cy="6.3" r="2.4" fill="#3a6fb8" stroke="#3a6fb8" stroke-width="1.4" stroke-dasharray="1.1 .9"/><circle cx="6.3" cy="6.3" r="1" fill="#fff"/></g>
<text x="291.00" y="526.5" textLength="65.00" lengthAdjust="spacingAndGlyphs" font-size="9" fill="#303030">PLC_HAT_R01  : 1*</text>
<rect x="358.5" y="519.5" width="7" height="7" fill="#e05a3a" stroke="#c04020"/><path d="M360 521L364 525M364 521L360 525" stroke="#fff" stroke-width="1"/>
<g transform="translate(384,517)"><rect x=".5" y=".5" width="10" height="8" fill="#fff" stroke="#404040" stroke-width=".8"/><path d="M.5 3H10.5M.5 5H10.5M.5 7H10.5M3 .5V8.5" stroke="#404040" stroke-width=".6"/></g>
<text x="396.00" y="526" textLength="47.00" lengthAdjust="spacingAndGlyphs" font-size="9" fill="#303030">Spreadsheet*</text>
<rect x="446.5" y="519.5" width="7" height="7" fill="#e8e8e8" stroke="#b8b8b8"/><path d="M448 521L452 525M452 521L448 525" stroke="#b8b8b8" stroke-width=".8"/>
<text x="4.00" y="542.5" textLength="255.00" lengthAdjust="spacingAndGlyphs" font-size="9.5" fill="#303030">Preselected: Unnamed.Sketch005.V_Axis (-53.600998,0.000000,-3.669879)</text>
<g transform="translate(883,534)"><rect x=".5" y=".5" width="6" height="9" rx="3" fill="none" stroke="#333" stroke-width="1"/><path d="M3.5 1V4" stroke="#333" stroke-width="1"/></g>
<text x="894.00" y="542.5" textLength="23.00" lengthAdjust="spacingAndGlyphs" font-size="9.5" fill="#303030">Blende</text>
<path d="M919.5 537.5H924L921.8 540Z" fill="#000"/>
<rect x="928" y="532" width="1" height="14" fill="#dcdcdc"/>
<text x="931.00" y="542.5" textLength="81.00" lengthAdjust="spacingAndGlyphs" font-size="9.5" fill="#303030">114.89 mm x 57.33 mm</text>
<rect x="1013" y="532" width="1" height="14" fill="#dcdcdc"/>
<rect x="1020" y="542" width="1" height="1" fill="#a0a0a0"/><rect x="1020" y="544" width="1" height="1" fill="#a0a0a0"/><rect x="1020" y="546" width="1" height="1" fill="#a0a0a0"/><rect x="1018" y="544" width="1" height="1" fill="#a0a0a0"/><rect x="1018" y="546" width="1" height="1" fill="#a0a0a0"/><rect x="1016" y="546" width="1" height="1" fill="#a0a0a0"/>
<svg x="187" y="98" width="837" height="418" viewBox="187 98 837 418"><defs><linearGradient id="bg" x1="0" y1="0" x2="0" y2="1"><stop offset="0" stop-color="#333366"/><stop offset="1" stop-color="#9798ac"/></linearGradient></defs>
<rect x="187" y="98" width="837" height="418" fill="url(#bg)"/>
<line x1="187" y1="98.5" x2="1024" y2="98.5" stroke="#5a5a80" stroke-width="1"/>
<path d="M202.5 98V516M275.5 98V516M348.5 98V516M421.5 98V516M567.5 98V516M640.5 98V516M712.5 98V516M785.5 98V516M858.5 98V516M931.5 98V516M1004.5 98V516M187 150.5H1024M187 222.5H1024M187 295.5H1024M187 441.5H1024M187 514.5H1024" stroke="#c8c8d8" stroke-opacity=".36" stroke-width="1" stroke-dasharray="2.4 1.9" fill="none"/>
<line x1="494.5" y1="98" x2="494.5" y2="516" stroke="#6fd06f" stroke-width="1"/>
<line x1="187" y1="368.5" x2="274" y2="368.5" stroke="#c87070" stroke-width="1.6"/>
<line x1="698" y1="368.5" x2="1024" y2="368.5" stroke="#b86a80" stroke-width="1.4"/>
<line x1="290" y1="368.5" x2="698" y2="368.5" stroke="#d030a0" stroke-width="2.2"/>
<rect x="307" y="207.3" width="116.3" height="101.4" fill="none" stroke="#22ea22" stroke-width="2.2"/>
<g stroke="#e8321e" stroke-width="1.4" fill="none"><path d="M306.5 163V207M423.4 163V207M306.5 177.5H349M398 177.5H423"/><path d="M273 207.3H306M288.2 212V233M288.2 282V303"/><path d="M290 369V402M306.8 309V402M313 387.8H326"/></g>
<g fill="#e8321e"><path d="M306.5 177.5L313.5 174L313.5 181Z"/><path d="M423 177.5L416 174L416 181Z"/><path d="M288.2 207.3L284.6 214L291.8 214Z"/><path d="M288.2 308.7L284.6 302.5L291.8 302.5Z"/><path d="M290 387.8L283.5 384.3L283.5 391.3Z"/><path d="M307 387.8L313.5 384.3L313.5 391.3Z"/></g>
<g fill="#e8321e"><rect x="361" y="196.3" width="7.5" height="1.6"/><rect x="361" y="318.5" width="7.5" height="1.6"/><rect x="433" y="254" width="1.6" height="8"/><rect x="295" y="254" width="1.6" height="6"/></g>
<g stroke="#f08830" stroke-width="1.6" fill="none"><path d="M273 308.8H306M274 368.5H290"/></g>
<g fill="#f08830"><path d="M288.2 309L284.7 315.4L291.7 315.4Z"/><path d="M288.2 368.3L284.7 362L291.7 362Z"/></g>
<text x="354.00" y="182.8" textLength="40.60" lengthAdjust="spacingAndGlyphs" font-size="13.5" fill="#d8321e">16 mm</text>
<text transform="translate(293.00,257) rotate(-90)" x="-20.30" y="0" textLength="40.60" lengthAdjust="spacingAndGlyphs" font-size="13.5" fill="#d8321e">14 mm</text>
<text transform="translate(293.00,338) rotate(-90)" x="-23.00" y="0" textLength="46.00" lengthAdjust="spacingAndGlyphs" font-size="13.5" fill="#f08830">8.2 mm</text>
<text x="225.50" y="392.8" textLength="59.50" lengthAdjust="spacingAndGlyphs" font-size="13.5" fill="#d8321e" font-weight="bold">−2.25 mm</text>
<g fill="#00ff00"><circle cx="290.5" cy="368.5" r="2.6"/><circle cx="494.5" cy="368.5" r="2.6"/><circle cx="698" cy="368.5" r="2.6"/><circle cx="307" cy="207.3" r="2.2"/><circle cx="423.3" cy="207.3" r="2.2"/><circle cx="307" cy="308.7" r="2.2"/><circle cx="423.3" cy="308.7" r="2.2"/></g>
<defs><radialGradient id="cg" cx=".5" cy=".5" r=".6"><stop offset=".55" stop-color="#fafbfd"/><stop offset="1" stop-color="#dde2ee"/></radialGradient></defs>
<rect x="959.5" y="122.5" width="40" height="40" rx="7" fill="url(#cg)" stroke="#c6cad8" stroke-width="1"/>
<rect x="965.5" y="128.5" width="28" height="28" fill="none" stroke="#d4d8e4" stroke-width=".8"/>
<path d="M961.5 124.5L965.5 128.5M997.5 124.5L993.5 128.5M961.5 160.5L965.5 156.5" stroke="#5a5a90" stroke-width=".9"/>
<text x="969.20" y="146.6" textLength="20.30" lengthAdjust="spacingAndGlyphs" font-size="11.5" fill="#202020">Left</text>
<path d="M958 162.3H999.5" stroke="#22a030" stroke-width="1.2"/><path d="M958 162.3L959.5 160" stroke="#22a030" stroke-width="1"/>
<path d="M999.5 122V162.3" stroke="#2a2ad0" stroke-width="1.2"/>
<path d="M994 157L999.5 162.3" stroke="#c03040" stroke-width="1"/>
<path d="M1003 119.5H1007" stroke="#2a2ad0" stroke-width="1"/>
<g fill="#e6e8f2"><path d="M979.3 102.8L975 107.3H983.6Z"/><path d="M939.5 142L944.2 137.6V146.6Z"/><path d="M1019.4 142L1014.6 137.6V146.6Z"/><path d="M979.3 182.3L975 177.6H983.6Z"/></g>
<g fill="none" stroke="#e6e8f2" stroke-width="2.8"><path d="M968 107.5Q958 110.5 952 117"/><path d="M990.5 107.5Q1000.5 110.5 1006.5 117"/></g>
<g fill="#e6e8f2"><path d="M949 120.5L948.5 114.5L955 118Z"/><path d="M1009.5 120.5L1010 114.5L1003.5 118Z"/></g>
<path d="M993.5 169.5L999 167L1005 169.5V177L999.5 179.5L993.5 177Z" fill="#d8d8d8"/><path d="M993.5 169.5L999 167L1005 169.5L999.5 172Z" fill="#f2f2f2"/><path d="M999.5 172L1005 169.5V177L999.5 179.5Z" fill="#bcbcbc"/>
<path d="M1008 172.5H1015.5L1011.8 176.5Z" fill="#3a3a55"/>
<path d="M1002.8 494.8V482" stroke="#1a1ab8" stroke-width="1.4"/><path d="M1002.8 479.5L1000.6 485H1005Z" fill="#1a1ab8"/>
<path d="M1002.8 494.8H990.5" stroke="#10a020" stroke-width="1.4"/><path d="M988 494.8L993 492.8V496.8Z" fill="#10a020"/>
<text x="1004.00" y="480.5" textLength="3.97" lengthAdjust="spacingAndGlyphs" font-size="6.5" fill="#202030">Z</text>
<text x="989.00" y="493" textLength="4.34" lengthAdjust="spacingAndGlyphs" font-size="6.5" fill="#202030">Y</text>
<text x="1004.00" y="496.5" textLength="4.34" lengthAdjust="spacingAndGlyphs" font-size="6.5" fill="#202030">X</text></svg>
<rect x="0.5" y="0.5" width="1023" height="548" fill="none" stroke="#747474" stroke-width="1"/>
</svg></body></html>
